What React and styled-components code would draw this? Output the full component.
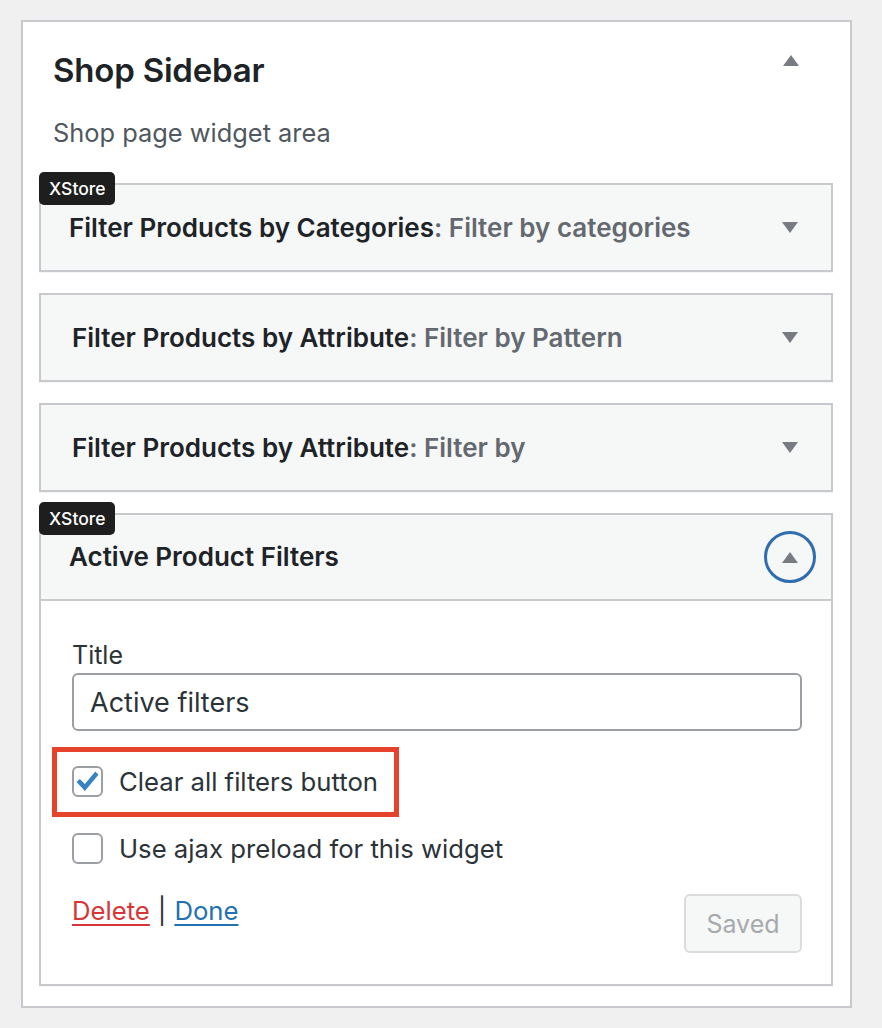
import React from "react";
import styled, { createGlobalStyle } from "styled-components";

const GlobalStyle = createGlobalStyle`
  html, body { margin: 0; padding: 0; }
  body {
    background: #f0f0f1;
    font-family: Inter, "Noto Sans", "Liberation Sans", sans-serif;
    color: #1d2327;
  }
  * { box-sizing: border-box; }
`;

const Page = styled.div`
  padding: 20px 30px 21px 21px;
`;

const Panel = styled.section`
  width: 831px;
  background: #fff;
  border: 2px solid #c8c9cc;
  padding: 28px 17px 20px 16px;
`;

const SidebarHead = styled.div`
  display: flex;
  justify-content: space-between;
  align-items: flex-start;
  padding-left: 14px;
`;

const SidebarTitle = styled.h2`
  margin: 0;
  font-size: 33px;
  line-height: 40px;
  font-weight: 600;
  color: #1d2327;
  letter-spacing: -0.2px;
`;

const Description = styled.p`
  margin: 28px 0 0 14px;
  font-size: 25.4px;
  line-height: 30px;
  color: #50575e;
`;

const WidgetList = styled.div`
  display: flex;
  flex-direction: column;
  gap: 21px;
  margin-top: 35px;
`;

const Widget = styled.div`
  position: relative;
  border: 2px solid #c8c9cc;
  background: #fff;
  box-shadow: 0 1px 1px rgba(0, 0, 0, 0.04);
`;

const Badge = styled.span`
  position: absolute;
  top: -13px;
  left: -2px;
  height: 33px;
  padding: 0 10px;
  display: flex;
  align-items: center;
  background: #1e1e1e;
  color: #fff;
  border-radius: 5px;
  font-size: 17.5px;
  font-weight: 500;
  z-index: 2;
`;

const WidgetHead = styled.div`
  display: flex;
  align-items: center;
  justify-content: space-between;
  height: ${(p) => (p.$open ? 86 : 85)}px;
  background: #f6f7f7;
  padding-left: ${(p) => p.$indent}px;
  padding-right: 15px;
  border-bottom: ${(p) => (p.$open ? "2px solid #c8c9cc" : "none")};
`;

const WidgetTitle = styled.h3`
  margin: 0;
  font-size: 26px;
  line-height: 32px;
  font-weight: 600;
  color: #1d2327;
`;

const Subtitle = styled.span`
  color: #646970;
`;

const Toggle = styled.span`
  width: 52px;
  height: 52px;
  display: flex;
  align-items: center;
  justify-content: center;
  border-radius: 50%;
  border: 3px solid ${(p) => (p.$focus ? "#2f6cb0" : "transparent")};
`;

const SidebarToggle = styled.span`
  width: 52px;
  display: flex;
  justify-content: center;
  margin-top: 5px;
  margin-right: 16px;
`;

const Body = styled.div`
  padding: 39px 29px 31px 31px;
`;

const Label = styled.label`
  display: block;
  font-size: 25px;
  line-height: 30px;
  color: #2c3338;
`;

const TextInput = styled.input`
  display: block;
  width: 100%;
  height: 58px;
  margin-top: 3px;
  padding: 0 16px;
  border: 2px solid #9b9ea2;
  border-radius: 6px;
  font-family: inherit;
  font-size: 27px;
  color: #2c3338;
  background: #fff;
  outline: none;
`;

const CheckRow = styled.label`
  position: relative;
  display: flex;
  align-items: center;
  gap: 16px;
  height: 40px;
  margin-top: ${(p) => p.$gap}px;
  font-size: 25.7px;
  color: #2c3338;
`;

const Box = styled.span`
  width: 31px;
  height: 31px;
  flex: none;
  border: 2px solid #9b9ea2;
  border-radius: 6px;
  background: #fff;
  display: flex;
  align-items: center;
  justify-content: center;
`;

const Highlight = styled.span`
  position: absolute;
  left: -20px;
  top: -14px;
  width: 347px;
  height: 70px;
  border: 5px solid #e5432b;
  pointer-events: none;
`;

const Footer = styled.div`
  display: flex;
  justify-content: space-between;
  align-items: flex-start;
  margin-top: 26px;
`;

const Links = styled.div`
  padding-top: 2px;
  font-size: 25.7px;
  line-height: 30px;
  color: #2c3338;
`;

const Link = styled.a`
  color: ${(p) => p.$color};
  text-decoration: underline;
  text-underline-offset: 4px;
  text-decoration-thickness: 2px;
  cursor: pointer;
`;

const Sep = styled.span`
  margin: 0 8px;
`;

const SavedButton = styled.button`
  width: 118px;
  height: 59px;
  border: 2px solid #dcdcde;
  border-radius: 6px;
  background: #f6f7f7;
  color: #a7aaad;
  font-family: inherit;
  font-size: 25px;
`;

const Triangle = ({ up }) => (
  <svg width="16" height="11" viewBox="0 0 16 11" aria-hidden="true">
    <path d={up ? "M8 0 L16 11 L0 11 Z" : "M0 0 L16 0 L8 11 Z"} fill="#787c82" />
  </svg>
);

const Check = () => (
  <svg width="25" height="23" viewBox="0 0 24 22" aria-hidden="true">
    <path
      d="M1.5 11.5 L4.5 8.5 L9.5 13.5 L19.5 1.5 L22.5 4.5 L9.5 20 Z"
      fill="#3582c4"
    />
  </svg>
);

const collapsed = [
  { title: "Filter Products by Categories", sub: "Filter by categories", badge: true, indent: 28 },
  { title: "Filter Products by Attribute", sub: "Filter by Pattern", badge: false, indent: 31 },
  { title: "Filter Products by Attribute", sub: "Filter by", badge: false, indent: 31 },
];

export default function App() {
  return (
    <>
      <GlobalStyle />
      <Page>
        <Panel>
          <SidebarHead>
            <SidebarTitle>Shop Sidebar</SidebarTitle>
            <SidebarToggle>
              <Triangle up />
            </SidebarToggle>
          </SidebarHead>
          <Description>Shop page widget area</Description>
          <WidgetList>
            {collapsed.map((w, i) => (
              <Widget key={i}>
                {w.badge && <Badge>XStore</Badge>}
                <WidgetHead $indent={w.indent}>
                  <WidgetTitle>
                    {w.title}
                    <Subtitle>: {w.sub}</Subtitle>
                  </WidgetTitle>
                  <Toggle>
                    <Triangle />
                  </Toggle>
                </WidgetHead>
              </Widget>
            ))}
            <Widget>
              <Badge>XStore</Badge>
              <WidgetHead $indent={28} $open>
                <WidgetTitle>Active Product Filters</WidgetTitle>
                <Toggle $focus>
                  <Triangle up />
                </Toggle>
              </WidgetHead>
              <Body>
                <Label>Title</Label>
                <TextInput defaultValue="Active filters" readOnly />
                <CheckRow $gap={30}>
                  <Box>
                    <Check />
                  </Box>
                  Clear all filters button
                  <Highlight />
                </CheckRow>
                <CheckRow $gap={27}>
                  <Box />
                  Use ajax preload for this widget
                </CheckRow>
                <Footer>
                  <Links>
                    <Link $color="#d63638">Delete</Link>
                    <Sep>|</Sep>
                    <Link $color="#2271b1">Done</Link>
                  </Links>
                  <SavedButton disabled>Saved</SavedButton>
                </Footer>
              </Body>
            </Widget>
          </WidgetList>
        </Panel>
      </Page>
    </>
  );
}
